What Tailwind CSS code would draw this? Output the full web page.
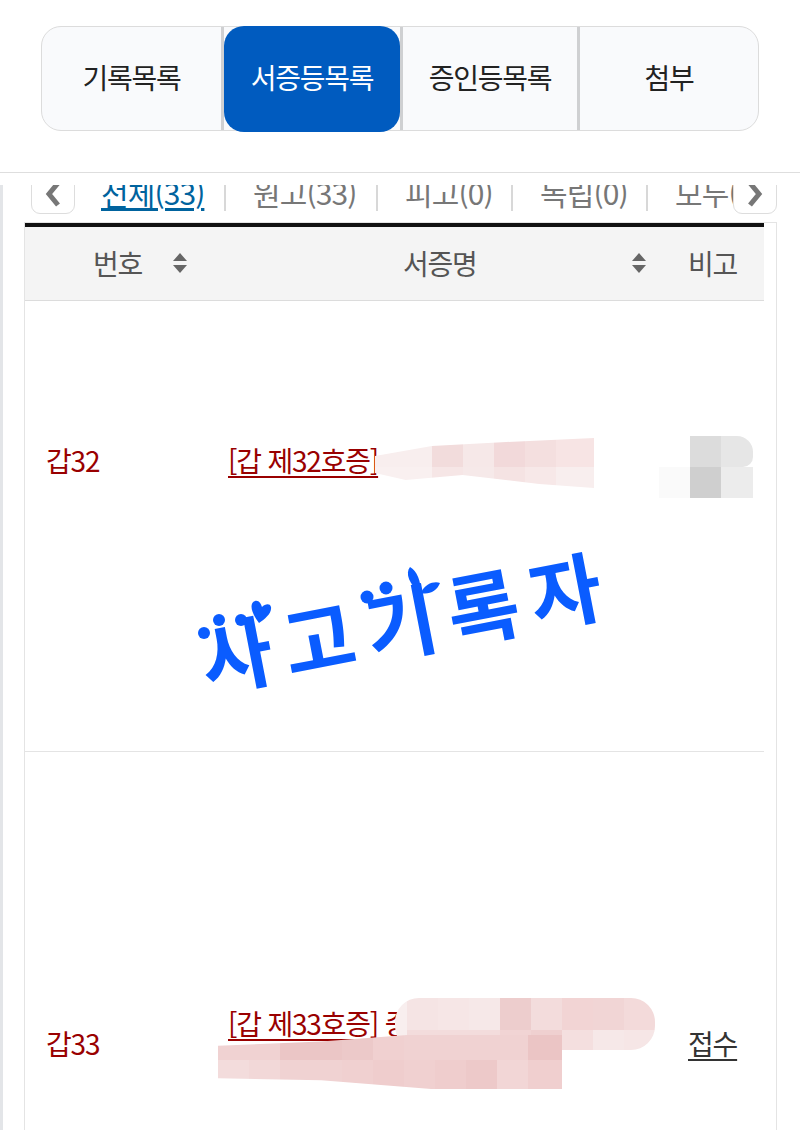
<!DOCTYPE html>
<html lang="ko">
<head>
<meta charset="utf-8">
<script src="https://cdn.jsdelivr.net/npm/@tailwindcss/browser@4"></script>
</head>
<body class="bg-white font-['Noto_Sans_CJK_KR','Noto_Sans',sans-serif] overflow-hidden">
<div class="w-[800px] h-[1130px] overflow-hidden flex flex-col">

  <header class="h-[173px] shrink-0 border-b border-[#dedede] pt-[26px] pl-[41px]">
    <nav class="relative w-[718px] h-[105px] flex rounded-[20px] border border-[#dcdcdc] bg-[#f9fafc] text-[28px] tracking-[-1.3px] text-[#222]">
      <a class="w-[182px] flex items-center justify-center border-r-[3px] border-[#cfd0d2] pb-[4px]">기록목록</a>
      <a class="w-[176px] -mt-px mb-[-2px] flex items-center justify-center rounded-[20px] bg-[#005bbf] text-white pb-[4px]">서증등목록</a>
      <a class="w-[180px] flex items-center justify-center border-x-[3px] border-[#cfd0d2] pb-[4px]">증인등목록</a>
      <a class="flex-1 flex items-center justify-center pb-[4px]">첨부</a>
    </nav>
  </header>

  <div class="h-[12px] shrink-0"></div>

  <main class="relative flex-1 overflow-hidden">
    <div class="absolute left-0 top-0 bottom-0 w-[3px] bg-[#e3e5e8]"></div>

    <!-- filter tabs -->
    <div class="relative h-[37px] overflow-hidden">
      <ul class="flex items-center h-[52px] -mt-[17px] pl-[101px] text-[30px] tracking-[-0.9px] text-[#777] whitespace-nowrap">
        <li class="w-[125px] shrink-0 border-r-2 border-[#d8d8d8] h-[36px] leading-[34px] mt-[-2px]"><a class="text-[#00639e] underline underline-offset-[3px] font-normal">전체(33)</a></li>
        <li class="w-[152px] shrink-0 pl-[27px] border-r-2 border-[#d8d8d8] h-[36px] leading-[34px] mt-[-2px]">원고(33)</li>
        <li class="w-[135px] shrink-0 pl-[27px] border-r-2 border-[#d8d8d8] h-[36px] leading-[34px] mt-[-2px]">피고(0)</li>
        <li class="w-[135px] shrink-0 pl-[27px] border-r-2 border-[#d8d8d8] h-[36px] leading-[34px] mt-[-2px]">독립(0)</li>
        <li class="shrink-0 pl-[27px] h-[36px] leading-[34px] mt-[-2px]">모두(0)</li>
      </ul>
    </div>
    <button class="absolute left-[31px] -top-[20px] w-[44px] h-[49px] flex items-end justify-center pb-[5px] rounded-[9px] border border-[#dddddd] bg-white">
      <svg width="20" height="28" viewBox="0 0 20 28"><path d="M15 3 L6 14 L15 25" fill="none" stroke="#777" stroke-width="5"/></svg>
    </button>
    <button class="absolute left-[733px] -top-[20px] w-[44px] h-[49px] flex items-end justify-center pb-[5px] rounded-[9px] border border-[#dddddd] bg-white">
      <svg width="20" height="28" viewBox="0 0 20 28"><path d="M5 3 L14 14 L5 25" fill="none" stroke="#777" stroke-width="5"/></svg>
    </button>

    <!-- table -->
    <div class="relative ml-[24px] w-[753px] border border-[#e4e4e4] border-b-0 h-[1000px] pr-[12px]">
      <div class="h-[4px] bg-[#111]"></div>
      <div class="grid grid-cols-[180px_478px_1fr] h-[74px] bg-[#f4f4f4] border-b border-[#dcdcdc] text-[28px] tracking-[-1.2px] text-[#555] items-center">
        <div class="flex items-center pl-[68px] pb-[2px]">
          <span class="w-[79px]">번호</span>
          <svg width="16" height="22" viewBox="0 0 16 22"><path d="M8 1 L15 9 H1 Z M1 13 H15 L8 21 Z" fill="#666"/></svg>
        </div>
        <div class="flex items-center pl-[198px] pb-[2px]">
          <span class="w-[228px]">서증명</span>
          <svg width="16" height="22" viewBox="0 0 16 22"><path d="M8 1 L15 9 H1 Z M1 13 H15 L8 21 Z" fill="#666"/></svg>
        </div>
        <div class="pl-[5px] pb-[2px]">비고</div>
      </div>

      <!-- row 1 -->
      <div class="relative grid grid-cols-[203px_1fr] h-[451px] border-b border-[#e4e4e4] pt-[140px] text-[28px] tracking-[-1.2px] text-[#990000]">
        <div class="pl-[21px] leading-[38px]">갑32</div>
        <div class="leading-[38px]"><a class="underline underline-offset-[4px]">[갑 제32호증]</a></div>

        <!-- pixelated masks -->
        <div class="absolute left-[350px] top-[137px] w-[219px] h-[50px] grid grid-cols-[57px_31px_31px_31px_31px_38px] grid-rows-[29px_21px] [clip-path:polygon(0_36%,26%_16%,60%_8%,100%_0,100%_100%,75%_92%,40%_74%,14%_84%,0_70%)]">
          <div class="bg-[#f8eeee]"></div><div class="bg-[#f2dcdc]"></div><div class="bg-[#f6e8e8]"></div><div class="bg-[#f2d9da]"></div><div class="bg-[#f4dfdf]"></div><div class="bg-[#f7e4e4]"></div>
          <div class="bg-[#f9f0f0]"></div><div class="bg-[#f6e6e6]"></div><div class="bg-[#f6e9e9]"></div><div class="bg-[#f5e3e3]"></div><div class="bg-[#f7e8e8]"></div><div class="bg-[#f8eeee]"></div>
        </div>
        <div class="absolute left-[634px] top-[135px] w-[94px] h-[62px] grid grid-cols-[31px_31px_32px] grid-rows-[31px_31px]">
          <div></div><div class="bg-[#dcdcdc]"></div><div class="bg-[#e6e6e6] rounded-tr-[16px] rounded-br-[10px]"></div>
          <div class="bg-[#fafafa]"></div><div class="bg-[#cfcfcf]"></div><div class="bg-[#ececec]"></div>
        </div>

        <!-- sticker -->
        <div class="absolute left-[171px] top-[262px] w-[420px] h-[110px] flex items-center justify-center -rotate-[11deg] text-[#0a5cff] text-[78px] leading-none font-bold tracking-[12px] whitespace-nowrap">사고기록자</div>
        <svg class="absolute left-0 top-0" width="740" height="450" viewBox="0 0 740 450">
          <g fill="#0a5cff">
            <circle cx="179" cy="332" r="6"/><circle cx="194" cy="319" r="6"/><circle cx="216" cy="319" r="6"/>
            <path d="M234 322 C226 312 224 302 230 300 C234 299 236 303 237 306 C240 303 245 302 246 306 C247 312 240 318 234 322 Z"/>
            <circle cx="342" cy="296" r="6.5"/><circle cx="361" cy="287" r="6.5"/>
            <path d="M396 292 C384 284 380 272 385 266 C392 270 396 280 396 292 Z M396 292 C400 282 410 280 415 282 C412 290 404 294 396 292 Z"/>
          </g>
        </svg>
      </div>

      <!-- row 2 -->
      <div class="relative grid grid-cols-[203px_460px_1fr] pt-[252px] text-[28px] tracking-[-1.2px] text-[#990000]">
        <div class="pl-[21px] pt-[20px] leading-[38px]">갑33</div>
        <div class="leading-[38px]"><a class="underline underline-offset-[4px]">[갑 제33호증]</a> 증</div>
        <div class="pt-[20px] leading-[38px]"><a class="text-[#333] underline underline-offset-[4px]">접수</a></div>

        <!-- pixelated masks -->
        <div class="absolute left-[370px] top-[246px] w-[260px] h-[52px] grid grid-cols-[12px_31px_31px_31px_31px_31px_31px_31px_31px] grid-rows-[32px_20px] rounded-[24px] overflow-hidden">
          <div class="bg-[#f8eeee]"></div><div class="bg-[#f5e4e4]"></div><div class="bg-[#f6e6e6]"></div><div class="bg-[#f6e8e8]"></div><div class="bg-[#edcdcd]"></div><div class="bg-[#f3dcdc]"></div><div class="bg-[#f2d4d4]"></div><div class="bg-[#f1d5d5]"></div><div class="bg-[#f3dada]"></div>
          <div class="bg-[#f8eeee]"></div><div class="bg-[#f3dcdc]"></div><div class="bg-[#f3dcdc]"></div><div class="bg-[#f3dcdc]"></div><div class="bg-[#f1d4d4]"></div><div class="bg-[#efd0d0]"></div><div class="bg-[#f4dfdf]"></div><div class="bg-[#f6e8e8]"></div><div class="bg-[#f6e6e6]"></div>
        </div>
        <div class="absolute left-[193px] top-[283px] w-[344px] h-[54px] grid grid-cols-[repeat(11,31px)_3px] grid-rows-[25px_29px] [clip-path:polygon(0_20%,30%_12%,55%_0,100%_0,100%_100%,62%_100%,30%_84%,0_80%)]">
          <div class="bg-[#f0d2d2]"></div><div class="bg-[#f0d2d2]"></div><div class="bg-[#ebc6c6]"></div><div class="bg-[#ebc6c6]"></div><div class="bg-[#ecc9c9]"></div><div class="bg-[#f0d0d0]"></div><div class="bg-[#f0d2d2]"></div><div class="bg-[#f0d2d2]"></div><div class="bg-[#f0d2d2]"></div><div class="bg-[#f0d2d2]"></div><div class="bg-[#ebc5c5]"></div><div class="bg-[#ebc5c5]"></div>
          <div class="bg-[#f3dcdc]"></div><div class="bg-[#f2d8d8]"></div><div class="bg-[#f0d2d2]"></div><div class="bg-[#f0d2d2]"></div><div class="bg-[#f0d0d0]"></div><div class="bg-[#efcdcd]"></div><div class="bg-[#f0d0d0]"></div><div class="bg-[#efcdcd]"></div><div class="bg-[#edc9c9]"></div><div class="bg-[#f2d6d6]"></div><div class="bg-[#f0cfcf]"></div><div class="bg-[#f0cfcf]"></div>
        </div>
      </div>
    </div>
  </main>
</div>
</body>
</html>
